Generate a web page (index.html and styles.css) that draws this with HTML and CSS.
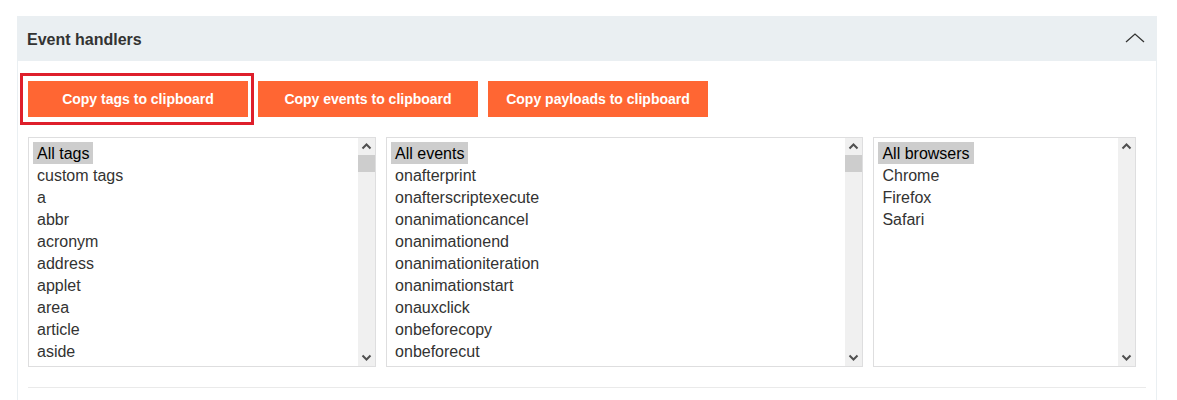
FILE: index.html
```html
<!DOCTYPE html>
<html lang="en">
<head>
<meta charset="utf-8">
<title>Event handlers</title>
<link rel="stylesheet" href="styles.css">
</head>
<body>
<section class="panel">
  <header class="panel-header">
    <h2 class="panel-title">Event handlers</h2>
    <button class="collapse" type="button" aria-label="Collapse section">
      <svg width="20" height="16" viewBox="0 0 20 16" fill="none" stroke="#333332" stroke-width="1.3"><path d="M1 11 10 3 19 11"/></svg>
    </button>
  </header>
  <div class="panel-body">
    <div class="actions">
      <button class="action action-marked" type="button">Copy tags to clipboard</button>
      <button class="action" type="button">Copy events to clipboard</button>
      <button class="action" type="button">Copy payloads to clipboard</button>
    </div>
    <div class="lists">
      <div class="list list-tags">
        <select class="list-select" multiple size="10" aria-label="Tags">
          <option selected>All tags</option>
          <option>custom tags</option>
          <option>a</option>
          <option>abbr</option>
          <option>acronym</option>
          <option>address</option>
          <option>applet</option>
          <option>area</option>
          <option>article</option>
          <option>aside</option>
        </select>
        <div class="scrollbar" aria-hidden="true">
          <svg class="arrow" viewBox="0 0 17 17"><path d="M4.5 10.5 8.5 6.5 12.5 10.5"/></svg>
          <div class="track"><div class="thumb"></div></div>
          <svg class="arrow" viewBox="0 0 17 17"><path d="M4.5 6.5 8.5 10.5 12.5 6.5"/></svg>
        </div>
      </div>
      <div class="list list-events">
        <select class="list-select" multiple size="10" aria-label="Events">
          <option selected>All events</option>
          <option>onafterprint</option>
          <option>onafterscriptexecute</option>
          <option>onanimationcancel</option>
          <option>onanimationend</option>
          <option>onanimationiteration</option>
          <option>onanimationstart</option>
          <option>onauxclick</option>
          <option>onbeforecopy</option>
          <option>onbeforecut</option>
        </select>
        <div class="scrollbar" aria-hidden="true">
          <svg class="arrow" viewBox="0 0 17 17"><path d="M4.5 10.5 8.5 6.5 12.5 10.5"/></svg>
          <div class="track"><div class="thumb"></div></div>
          <svg class="arrow" viewBox="0 0 17 17"><path d="M4.5 6.5 8.5 10.5 12.5 6.5"/></svg>
        </div>
      </div>
      <div class="list list-browsers">
        <select class="list-select" multiple size="10" aria-label="Browsers">
          <option selected>All browsers</option>
          <option>Chrome</option>
          <option>Firefox</option>
          <option>Safari</option>
        </select>
        <div class="scrollbar" aria-hidden="true">
          <svg class="arrow" viewBox="0 0 17 17"><path d="M4.5 10.5 8.5 6.5 12.5 10.5"/></svg>
          <div class="track"></div>
          <svg class="arrow" viewBox="0 0 17 17"><path d="M4.5 6.5 8.5 10.5 12.5 6.5"/></svg>
        </div>
      </div>
    </div>
    <hr class="divider">
  </div>
</section>
</body>
</html>
```
FILE: styles.css
```css
* {
  box-sizing: border-box;
}

body {
  margin: 0;
  padding: 16px 20px 0 17px;
  background: #fff;
  color: #333332;
  font-family: "Liberation Sans", Arial, sans-serif;
  font-size: 16px;
}

.panel {
  min-height: calc(100vh - 16px);
  border: 1px solid #eaeff2;
  border-width: 0 1px;
}

.panel-header {
  display: flex;
  align-items: center;
  justify-content: space-between;
  margin: 0 -1px;
  padding: 0 12px 0 10px;
  height: 45px;
  background: #eaeff2;
}

.panel-title {
  margin: 0;
  padding-top: 2px;
  font-size: 16px;
  line-height: 22px;
}

.collapse {
  display: flex;
  padding: 0;
  border: 0;
  background: none;
}

.panel-body {
  padding: 20px 10px 0;
}

.actions {
  display: flex;
  gap: 10px;
}

.action {
  position: relative;
  width: 220px;
  height: 36px;
  padding: 0;
  border: 0;
  background: #ff6633;
  color: #fff;
  font-family: inherit;
  font-size: 14px;
  font-weight: bold;
}

.action-marked::after {
  content: "";
  position: absolute;
  inset: -8px -6px -8px -8px;
  border: 3px solid #de1f2b;
}

.lists {
  display: flex;
  gap: 10px;
  margin: 20px 10px 20px 0;
}

.list {
  display: flex;
  min-width: 0;
  border: 1px solid #dededf;
}

.list-tags {
  flex: 348 1 0;
}

.list-events {
  flex: 478 1 0;
}

.list-browsers {
  flex: 262 1 0;
}

.list-select {
  flex: 1;
  min-width: 0;
  height: 228px;
  padding: 4px;
  border: 0;
  outline: 0;
  background: #fff;
  color: #333332;
  font-family: inherit;
  font-size: 16px;
  overflow: hidden;
  scrollbar-width: none;
}

.list-select option {
  width: fit-content;
  min-height: 22px;
  padding: 3px 4px 1px;
}

.list-select option:checked {
  background: #cdcdcd;
  color: #000;
}

.scrollbar {
  display: flex;
  flex-direction: column;
  width: 17px;
  background: #f0f0f0;
}

.arrow {
  width: 17px;
  height: 17px;
  fill: none;
  stroke: #505050;
  stroke-width: 2;
}

.track {
  flex: 1;
}

.thumb {
  height: 17px;
  background: #cdcdcd;
}

.divider {
  margin: 0;
  border: 0;
  border-top: 1px solid #eaeaea;
}
```
